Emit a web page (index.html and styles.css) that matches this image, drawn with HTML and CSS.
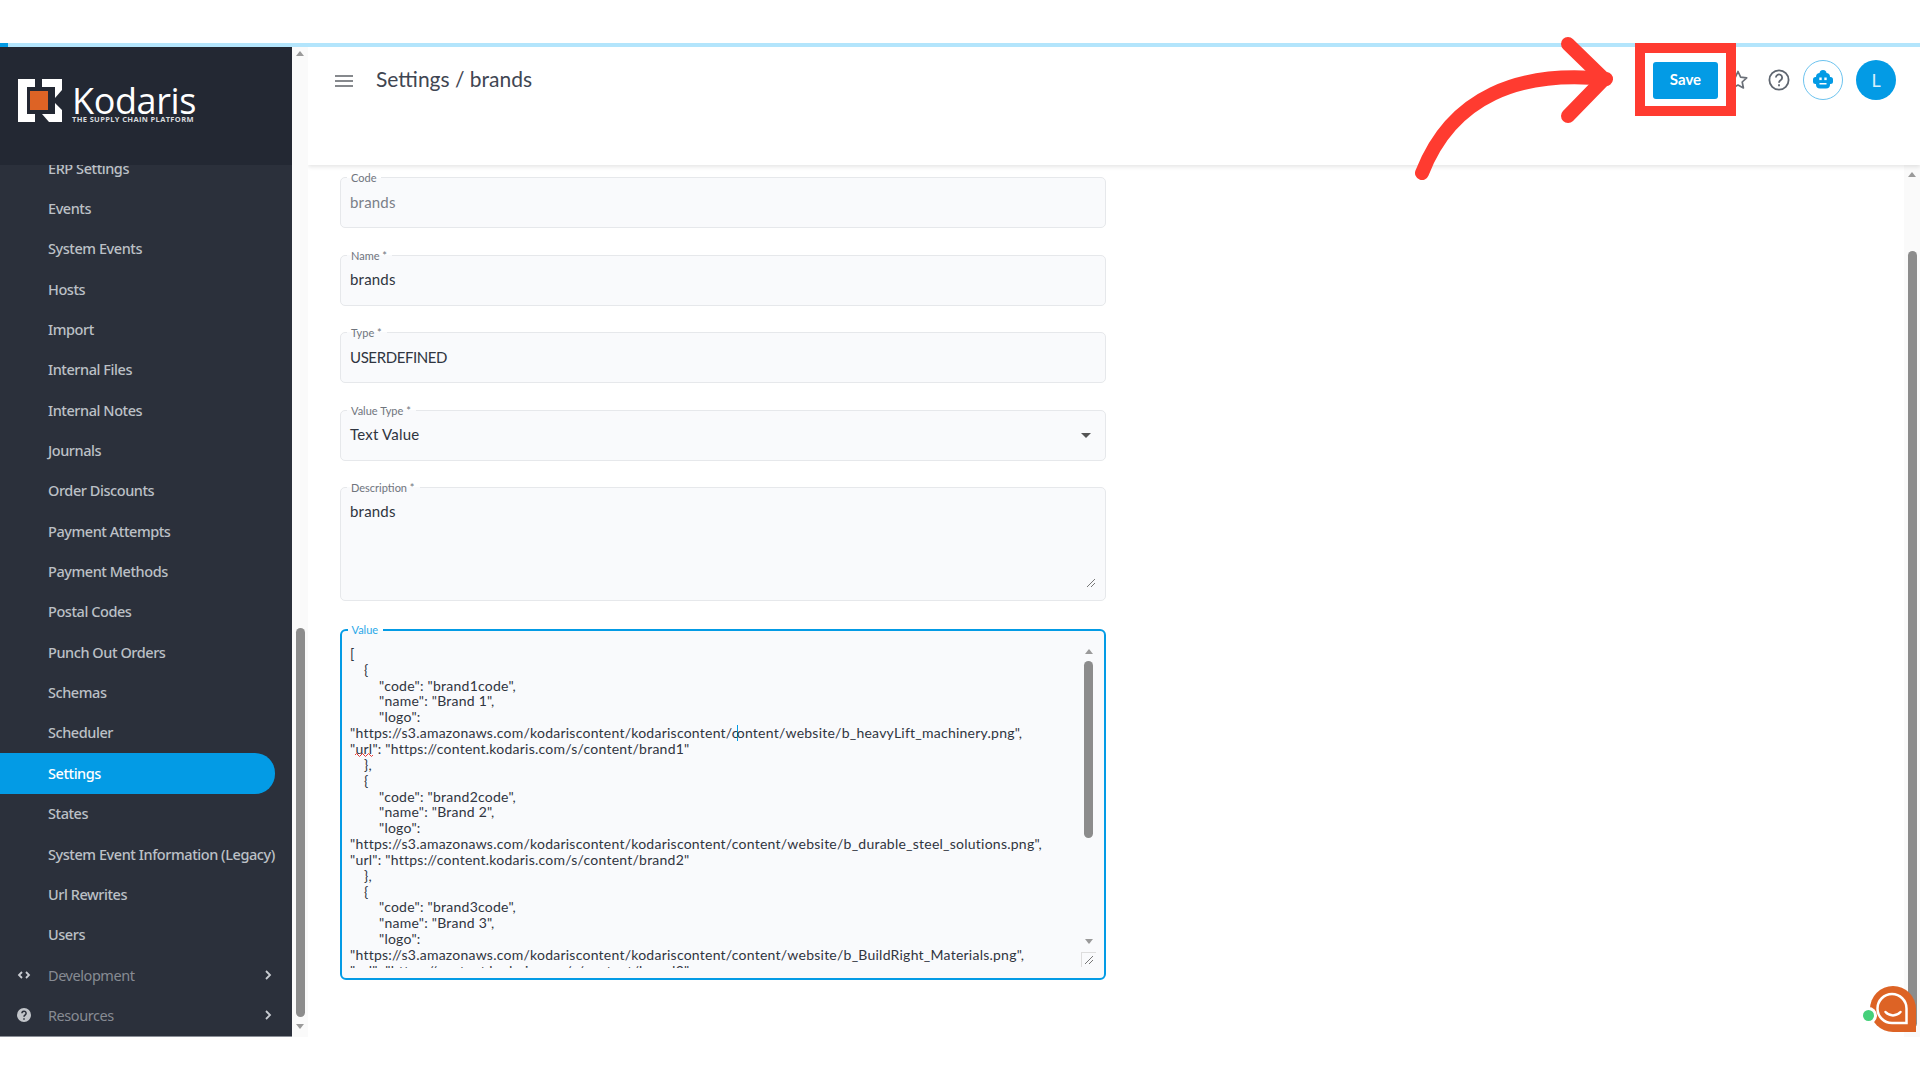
FILE: index.html
```html
<!DOCTYPE html>
<html lang="en">
<head>
<meta charset="utf-8">
<title>Settings / brands</title>
<link rel="stylesheet" href="styles.css">
</head>
<body>
<div class="page">
  <div class="top-gap"></div>
  <div class="progress"><div class="progress-fill"></div></div>
  <div class="app">
    <aside class="sidebar">
      <div class="brand">
        <svg class="brand-mark" viewBox="18 79 44 43" width="44" height="43">
          <polygon fill="#fff" points="18,79 35,79 35,87 27,87 27,114 35,114 35,122 18,122"/>
          <polygon fill="#fff" points="42,79 62,79 62,90 55,98 55,87 42,87"/>
          <polygon fill="#fff" points="42,114 55,114 55,103 62,110 62,122 49,122"/>
          <rect fill="#dd6325" x="30" y="91" width="18" height="19"/>
        </svg>
        <div class="brand-text">
          <div class="brand-name">Kodaris</div>
          <div class="brand-tag">THE SUPPLY CHAIN PLATFORM</div>
        </div>
      </div>
      <nav class="nav">
        <a class="nav-item first">ERP Settings</a>
        <a class="nav-item">Events</a>
        <a class="nav-item">System Events</a>
        <a class="nav-item">Hosts</a>
        <a class="nav-item">Import</a>
        <a class="nav-item">Internal Files</a>
        <a class="nav-item">Internal Notes</a>
        <a class="nav-item">Journals</a>
        <a class="nav-item">Order Discounts</a>
        <a class="nav-item">Payment Attempts</a>
        <a class="nav-item">Payment Methods</a>
        <a class="nav-item">Postal Codes</a>
        <a class="nav-item">Punch Out Orders</a>
        <a class="nav-item">Schemas</a>
        <a class="nav-item">Scheduler</a>
        <a class="nav-item active">Settings</a>
        <a class="nav-item">States</a>
        <a class="nav-item">System Event Information (Legacy)</a>
        <a class="nav-item">Url Rewrites</a>
        <a class="nav-item">Users</a>
        <a class="nav-item group">
          <svg class="group-icon" viewBox="0 0 16 16" width="16" height="16"><path d="M6 5 3 8l3 3M10 5l3 3-3 3" fill="none" stroke="#c9ccd2" stroke-width="1.8"/></svg>
          <span class="group-label">Development</span>
          <svg class="chev" viewBox="0 0 8 12" width="8" height="12"><path d="M2 2l4 4-4 4" fill="none" stroke="#c9ccd2" stroke-width="1.8"/></svg>
        </a>
        <a class="nav-item group">
          <svg class="group-icon" viewBox="0 0 16 16" width="16" height="16"><circle cx="8" cy="8" r="7" fill="#c2c5ca"/><path d="M5.9 6.3a2.1 2.1 0 1 1 3.3 1.7c-.8.5-1.2.9-1.2 1.8M8 11.2v1.6" fill="none" stroke="#2b303b" stroke-width="1.5"/></svg>
          <span class="group-label">Resources</span>
          <svg class="chev" viewBox="0 0 8 12" width="8" height="12"><path d="M2 2l4 4-4 4" fill="none" stroke="#c9ccd2" stroke-width="1.8"/></svg>
        </a>
      </nav>
    </aside>
    <div class="scrollbar side-scroll">
      <span class="arrow up"></span>
      <span class="thumb side-thumb"></span>
      <span class="arrow down side-down"></span>
    </div>
    <main class="main">
      <header class="header">
        <svg class="menu-icon" viewBox="0 0 18 12" width="18" height="12"><path d="M0 1h18M0 6h18M0 11h18" stroke="#5f6368" stroke-width="1.7"/></svg>
        <h1 class="title">Settings / brands</h1>
        <div class="actions">
          <button class="save">Save</button>
          <svg class="star" viewBox="0 0 24 24" width="24" height="24"><path d="M12 3.5l2.6 5.600 6.100.7-4.500 4.200 1.200 6L12 17l-5.400 3 1.200-6-4.500-4.200 6.100-.7z" fill="none" stroke="#6b7078" stroke-width="1.7" stroke-linejoin="round"/></svg>
          <svg class="help" viewBox="0 0 24 24" width="24" height="24"><circle cx="12" cy="12" r="9.600" fill="none" stroke="#5f6670" stroke-width="1.8"/><path d="M8.900 9.600a3.100 3.100 0 1 1 4.900 2.500c-1.200.8-1.800 1.300-1.800 2.700M12 16.200v2" fill="none" stroke="#5f6670" stroke-width="1.8"/></svg>
          <div class="bot">
            <svg viewBox="0 0 24 24" width="24" height="24">
              <circle cx="12" cy="5.500" r="3.500" fill="#039be5"/>
              <rect x="5" y="5" width="14" height="15.500" rx="4" fill="#039be5"/>
              <rect x="2" y="9" width="20" height="7" rx="2.500" fill="#039be5"/>
              <rect x="8.300" y="9.500" width="2.400" height="2.600" fill="#fff"/>
              <rect x="13.300" y="9.500" width="2.400" height="2.600" fill="#fff"/>
              <rect x="8.500" y="15" width="7" height="1.500" fill="#fff"/>
            </svg>
          </div>
          <div class="avatar">L</div>
        </div>
      </header>
      <div class="body">
        <form class="form">
          <div class="field short">
            <label class="label">Code</label>
            <span class="val muted">brands</span>
          </div>
          <div class="field short">
            <label class="label">Name *</label>
            <span class="val">brands</span>
          </div>
          <div class="field short">
            <label class="label">Type *</label>
            <span class="val caps">USERDEFINED</span>
          </div>
          <div class="field short select">
            <label class="label">Value Type *</label>
            <span class="val">Text Value</span>
            <span class="caret-down"></span>
          </div>
          <div class="field desc">
            <label class="label">Description *</label>
            <span class="val">brands</span>
            <svg class="grip" viewBox="0 0 10 10" width="10" height="10"><path d="M1 9 9 1M5 9l4-4" stroke="#777" stroke-width="1"/></svg>
          </div>
          <div class="field value">
            <label class="label focus">Value</label>
            <div class="code">
              <div>[</div>
              <div class="i1">{</div>
              <div class="i2">"code": "brand1code",</div>
              <div class="i2">"name": "Brand 1",</div>
              <div class="i2">"logo":</div>
              <div>"https://s3.amazonaws.com/kodariscontent/kodariscontent/c<span class="text-caret"></span>ontent/website/b_heavyLift_machinery.png",</div>
              <div>"<span class="spell">url<svg class="squiggle" viewBox="0 0 18 4" width="18" height="4"><path d="M0 2q1.500-3 3 0t3 0 3 0 3 0 3 0 3 0" fill="none" stroke="#e53935" stroke-width="1"/></svg></span>": "https://content.kodaris.com/s/content/brand1"</div>
              <div class="i1">},</div>
              <div class="i1">{</div>
              <div class="i2">"code": "brand2code",</div>
              <div class="i2">"name": "Brand 2",</div>
              <div class="i2">"logo":</div>
              <div>"https://s3.amazonaws.com/kodariscontent/kodariscontent/content/website/b_durable_steel_solutions.png",</div>
              <div>"url": "https://content.kodaris.com/s/content/brand2"</div>
              <div class="i1">},</div>
              <div class="i1">{</div>
              <div class="i2">"code": "brand3code",</div>
              <div class="i2">"name": "Brand 3",</div>
              <div class="i2">"logo":</div>
              <div>"https://s3.amazonaws.com/kodariscontent/kodariscontent/content/website/b_BuildRight_Materials.png",</div>
              <div>"url": "https://content.kodaris.com/s/content/brand3"</div>
            </div>
            <div class="scrollbar code-scroll">
              <span class="arrow up"></span>
              <span class="thumb code-thumb"></span>
              <span class="arrow down code-down"></span>
              <span class="resize"><svg viewBox="0 0 10 10" width="10" height="10"><path d="M1 9 9 1M5 9l4-4" stroke="#777" stroke-width="1"/></svg></span>
            </div>
          </div>
        </form>
        <div class="scrollbar main-scroll">
          <span class="arrow up"></span>
          <span class="thumb main-thumb"></span>
        </div>
      </div>
    </main>
  </div>

  <svg class="annotation" viewBox="0 0 1920 1080" width="1920" height="1080">
    <path d="M1422 173C1452 96 1520 70 1606 79" fill="none" stroke="#ff3b30" stroke-width="14" stroke-linecap="round"/>
    <path d="M1568 44 1604 79 1568 116" fill="none" stroke="#ff3b30" stroke-width="14" stroke-linecap="round" stroke-linejoin="round"/>
    <rect x="1640" y="48" width="91" height="63" fill="none" stroke="#ff3b30" stroke-width="10"/>
  </svg>

  <div class="chat">
    <svg class="chat-bubble" viewBox="0 0 46 46" width="46" height="46">
      <path d="M23 0a23 23 0 0 0-23 23 23 23 0 0 0 23 23h23V23A23 23 0 0 0 23 0z" fill="#dd6325"/>
      <path d="M22 8a14.500 14.500 0 0 0 0 29h14.500V22.500A14.500 14.500 0 0 0 22 8z" fill="none" stroke="#fff" stroke-width="2.500"/>
      <path d="M15.500 26c4 4.500 11 4.500 15 0" fill="none" stroke="#fff" stroke-width="2.500" stroke-linecap="round"/>
    </svg>
    <span class="chat-dot"></span>
  </div>
</div>
</body>
</html>
```
FILE: styles.css
```css
* { box-sizing: border-box; }
html, body { margin: 0; padding: 0; }
body { background: #fff; font-family: "Lato", "Liberation Sans", sans-serif; overflow: hidden; }
.page { position: relative; width: 1920px; height: 1080px; display: flex; flex-direction: column; }
.top-gap { height: 43px; }
.progress { height: 4px; background: #b3e5fc; }
.progress-fill { width: 8px; height: 100%; background: #039be5; }
.app { height: 990px; display: flex; }

.sidebar { width: 292px; display: flex; flex-direction: column; background: #2b303b; border-bottom: 1px solid #8b8f97; }
.brand { height: 118px; flex: none; background: #232833; display: flex; align-items: flex-start; padding: 32px 0 0 18px; gap: 10px; }
.brand-mark { flex: none; }
.brand-text { color: #fff; margin-top: 7px; }
.brand-name { font-family: "Open Sans", sans-serif; font-size: 36px; line-height: 29px; letter-spacing: -.4px; height: 29px; }
.brand-tag { font-family: "Open Sans", sans-serif; font-size: 7.5px; line-height: 9px; font-weight: 700; letter-spacing: .35px; color: #d8dadd; white-space: nowrap; }
.nav { flex: 1; overflow: hidden; display: flex; flex-direction: column; }
.nav-item { flex: none; height: 40.35px; display: flex; align-items: center; padding: 0 0 1px 48px; font-family: "Noto Sans", sans-serif; font-size: 14.5px; font-weight: 500; letter-spacing: -.44px; color: #bcc0c6; white-space: nowrap; }
.nav-item.first { margin-top: -17px; }
.nav-item.active { width: 275px; background: #039be5; color: #fff; border-radius: 0 20px 20px 0; }
.nav-item.group { color: #878b93; font-weight: 400; padding-left: 16px; padding-right: 20px; }
.group-label { margin-left: 16px; flex: 1; }

.scrollbar { display: flex; flex-direction: column; align-items: center; background: #fafafa; }
.side-scroll { width: 16px; padding-top: 4px; }
.arrow { flex: none; width: 0; height: 0; border-left: 4.5px solid transparent; border-right: 4.5px solid transparent; }
.arrow.up { border-bottom: 5px solid #9a9a9a; }
.arrow.down { border-top: 5px solid #9a9a9a; }
.thumb { flex: none; display: block; width: 9px; border-radius: 5px; background: #8c8c8c; }
.side-thumb { margin-top: 572px; height: 389px; }
.side-down { margin-top: 7px; }

.main { flex: 1; min-width: 0; display: flex; flex-direction: column; }
.header { height: 118px; flex: none; display: flex; align-items: flex-start; padding: 13px 24px 0 27px; box-shadow: 0 2px 4px rgba(0,0,0,.1); clip-path: inset(0 0 -10px 0); position: relative; background: #fff; }
.menu-icon { margin-top: 15px; flex: none; }
.title { margin: 4px 0 0 23px; font-size: 21px; line-height: 30px; font-weight: 400; color: #3f4652; letter-spacing: 0; }
.actions { margin-left: auto; height: 40px; display: flex; align-items: center; }
.save { width: 65px; height: 37px; border: 0; border-radius: 3px; background: #039be5; color: #fff; font: 700 15px "Lato", sans-serif; padding: 0 0 2px; }
.star { margin-left: 8px; }
.help { margin-left: 17px; }
.bot { margin-left: 12px; width: 40px; height: 40px; border-radius: 50%; border: 1.5px solid #6cc3ef; display: flex; align-items: center; justify-content: center; }
.avatar { margin-left: 13px; width: 40px; height: 40px; border-radius: 50%; background: #039be5; color: #d8f0fb; font-size: 18px; display: flex; align-items: center; justify-content: center; }

.body { flex: 1; min-height: 0; display: flex; }
.form { flex: 1; padding: 12px 0 0 32px; display: flex; flex-direction: column; gap: 26.5px; }
.field { position: relative; width: 766px; background: #f9fafc; border: 1.5px solid #e6e8eb; border-radius: 5px; padding: 0 9px; color: #2f3540; }
.short { height: 51px; display: flex; align-items: center; padding-bottom: 2px; }
.desc { height: 114px; padding-top: 14px; }
.value { height: 351px; margin-top: 1.5px; border: 2px solid #039be5; border-radius: 6px; padding: 15px 8px 0; display: flex; align-items: flex-start; }
.label { position: absolute; top: -7px; left: 6px; padding: 0 5px 0 4px; font-size: 11px; line-height: 13px; color: #70757d; background: linear-gradient(#fff 50%, #f9fafc 50%); }
.label.focus { top: -8.5px; left: 5.5px; color: #29a8e8; }
.val { font-size: 15px; line-height: 18px; letter-spacing: .2px; display: block; }
.caps { letter-spacing: -.4px; }
.muted { color: #7b8088; }
.select { justify-content: space-between; }
.caret-down { width: 0; height: 0; margin-right: 5px; margin-top: 2px; border-left: 5px solid transparent; border-right: 5px solid transparent; border-top: 5px solid #555; }
.grip { position: absolute; right: 9px; bottom: 12px; }

.code { width: 733px; height: 322px; overflow: hidden; font-size: 14px; line-height: 15.83px; letter-spacing: .24px; white-space: nowrap; color: #30353f; }
.i1 { padding-left: 14px; }
.i2 { padding-left: 29px; }
.spell { position: relative; }
.squiggle { position: absolute; left: 0; top: 13px; }
.text-caret { display: inline-block; width: 1px; height: 16px; margin: 0 -1px 0 -2px; background: #039be5; vertical-align: -3px; }
.code-scroll { position: relative; width: 15px; flex: none; margin: -11px 0 0 0; padding-top: 14px; background: none; height: 332px; }
.code-thumb { margin-top: 7px; height: 177px; }
.code-down { margin-top: 101px; }
.resize { position: absolute; bottom: 0; right: 0; width: 15px; height: 15px; border: 1px solid #ddd; border-width: 1px 0 0 1px; display: flex; align-items: center; justify-content: center; }

.main-scroll { width: 16px; flex: none; padding-top: 7px; }
.main-thumb { margin-top: 74px; height: 777px; }

.annotation { position: absolute; left: 0; top: 0; pointer-events: none; }
.chat { position: absolute; left: 1860px; top: 985px; width: 60px; height: 50px; overflow: hidden; }
.chat-dot { position: absolute; left: 3px; top: 25px; width: 11px; height: 11px; border-radius: 50%; background: #45d07a; box-shadow: 0 0 0 3px #fff; }
.chat-bubble { position: absolute; left: 10px; top: 1px; }
```
